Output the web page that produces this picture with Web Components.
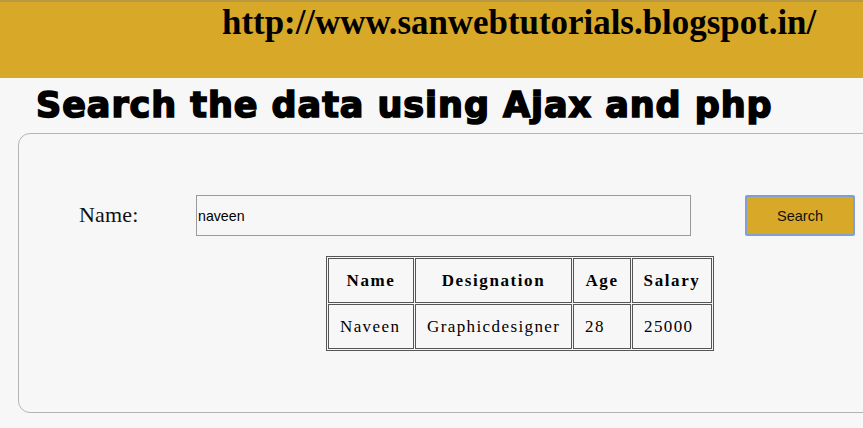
<!DOCTYPE html>
<html>
<head>
<meta charset="utf-8">
<title>Search the data using Ajax and php</title>
<style>
html, body { margin: 0; height: 100%; overflow: hidden; background: #f8f7f8; }
body { font-family: "Liberation Serif", serif; color: #000; }
</style>
</head>
<body>
<site-banner>http://www.sanwebtutorials.blogspot.in/</site-banner>
<page-title>Search the data using Ajax and php</page-title>
<search-panel>
  <search-form label="Name:" value="naveen" action="Search"></search-form>
  <result-table></result-table>
</search-panel>

<script>
// each component keeps its own template + styles
function makeTemplate(html) {
  const t = document.createElement('template');
  t.innerHTML = html;
  return t;
}

const bannerTemplate = makeTemplate(`
  <style>
  :host {
    display: block;
    height: 76px;
    border-top: 2px solid #b89a45;
    background: #d8a928;
    padding-left: 222px;
    font: bold 34.9px/42px "Liberation Serif", serif;
    color: #000;
  }
  </style>
  <slot></slot>
`);

class SiteBanner extends HTMLElement {
  constructor() {
    super();
    this.attachShadow({ mode: 'open' });
    this.shadowRoot.appendChild(bannerTemplate.content.cloneNode(true));
  }
}

const titleTemplate = makeTemplate(`
  <style>
  :host {
    display: block;
    height: 55px;
    padding-left: 36px;
    font: bold 35px/55px "DejaVu Sans", sans-serif;
    letter-spacing: 0.94px;
    color: #000;
    -webkit-text-stroke: 1.6px #000;
    white-space: nowrap;
  }
  </style>
  <slot></slot>
`);

class PageTitle extends HTMLElement {
  constructor() {
    super();
    this.attachShadow({ mode: 'open' });
    this.shadowRoot.appendChild(titleTemplate.content.cloneNode(true));
  }
}

const panelTemplate = makeTemplate(`
  <style>
  :host {
    display: block;
    box-sizing: border-box;
    width: 860px;
    height: 280px;
    margin-left: 18px;
    border: 1px solid #b4b4b4;
    border-radius: 12px;
    padding-top: 61px;
  }
  </style>
  <slot></slot>
`);

class SearchPanel extends HTMLElement {
  constructor() {
    super();
    this.attachShadow({ mode: 'open' });
    this.shadowRoot.appendChild(panelTemplate.content.cloneNode(true));
  }
}

const formTemplate = makeTemplate(`
  <style>
  :host { display: block; }
  .row {
    display: grid;
    grid-template-columns: 117px 495px auto;
    align-items: center;
    justify-content: start;
    padding-left: 60px;
    height: 41px;
  }
  .label {
    padding-bottom: 2px;
    font: 22px "Liberation Serif", serif;
    letter-spacing: 0.2px;
    color: #111;
  }
  .field {
    box-sizing: border-box;
    height: 41px;
    border: 1px solid #9a9a9a;
    padding-left: 1px;
    font: 14.2px/40px "Liberation Sans", sans-serif;
    color: #000;
  }
  button {
    box-sizing: border-box;
    width: 110px;
    height: 41px;
    margin-left: 54px;
    padding: 0;
    background: #d8a928;
    border: 2px solid #7f9fd8;
    border-radius: 2px;
    font: 14.5px "Liberation Sans", sans-serif;
    color: #111;
  }
  </style>
  <div class="row">
    <span class="label"></span>
    <div class="field" role="textbox"></div>
    <button type="button"></button>
  </div>
`);

class SearchForm extends HTMLElement {
  constructor() {
    super();
    this.attachShadow({ mode: 'open' });
    this.shadowRoot.appendChild(formTemplate.content.cloneNode(true));
  }
  connectedCallback() {
    const root = this.shadowRoot;
    root.querySelector('.label').textContent = this.getAttribute('label');
    root.querySelector('.field').textContent = this.getAttribute('value');
    root.querySelector('button').textContent = this.getAttribute('action');
  }
}

const tableTemplate = makeTemplate(`
  <style>
  :host {
    display: block;
    padding: 20px 0 0 307px;
  }
  table {
    table-layout: fixed;
    width: 388px;
    box-sizing: border-box;
    border: 1px solid #555;
    border-spacing: 1px;
    font: 17px "Liberation Serif", serif;
    letter-spacing: 1.4px;
    color: #000;
  }
  th, td {
    box-sizing: border-box;
    border: 1px solid #555;
    padding: 0 0 0 11px;
    height: 45px;
    text-align: left;
    font-weight: normal;
  }
  th {
    padding: 0;
    text-align: center;
    font-weight: bold;
    letter-spacing: 1.6px;
  }
  th:nth-child(1) { width: 86px; }
  th:nth-child(2) { width: 157px; }
  th:nth-child(3) { width: 58px; }
  </style>
  <table>
    <thead><tr></tr></thead>
    <tbody></tbody>
  </table>
`);

class ResultTable extends HTMLElement {
  constructor() {
    super();
    this.attachShadow({ mode: 'open' });
    this.shadowRoot.appendChild(tableTemplate.content.cloneNode(true));
  }
  connectedCallback() {
    const head = this.shadowRoot.querySelector('thead tr');
    const body = this.shadowRoot.querySelector('tbody');
    ['Name', 'Designation', 'Age', 'Salary'].forEach(h => {
      const th = document.createElement('th');
      th.textContent = h;
      head.appendChild(th);
    });
    const tr = document.createElement('tr');
    ['Naveen', 'Graphicdesigner', '28', '25000'].forEach(v => {
      const td = document.createElement('td');
      td.textContent = v;
      tr.appendChild(td);
    });
    body.appendChild(tr);
  }
}

customElements.define('site-banner', SiteBanner);
customElements.define('page-title', PageTitle);
customElements.define('search-panel', SearchPanel);
customElements.define('search-form', SearchForm);
customElements.define('result-table', ResultTable);
</script>
</body>
</html>
